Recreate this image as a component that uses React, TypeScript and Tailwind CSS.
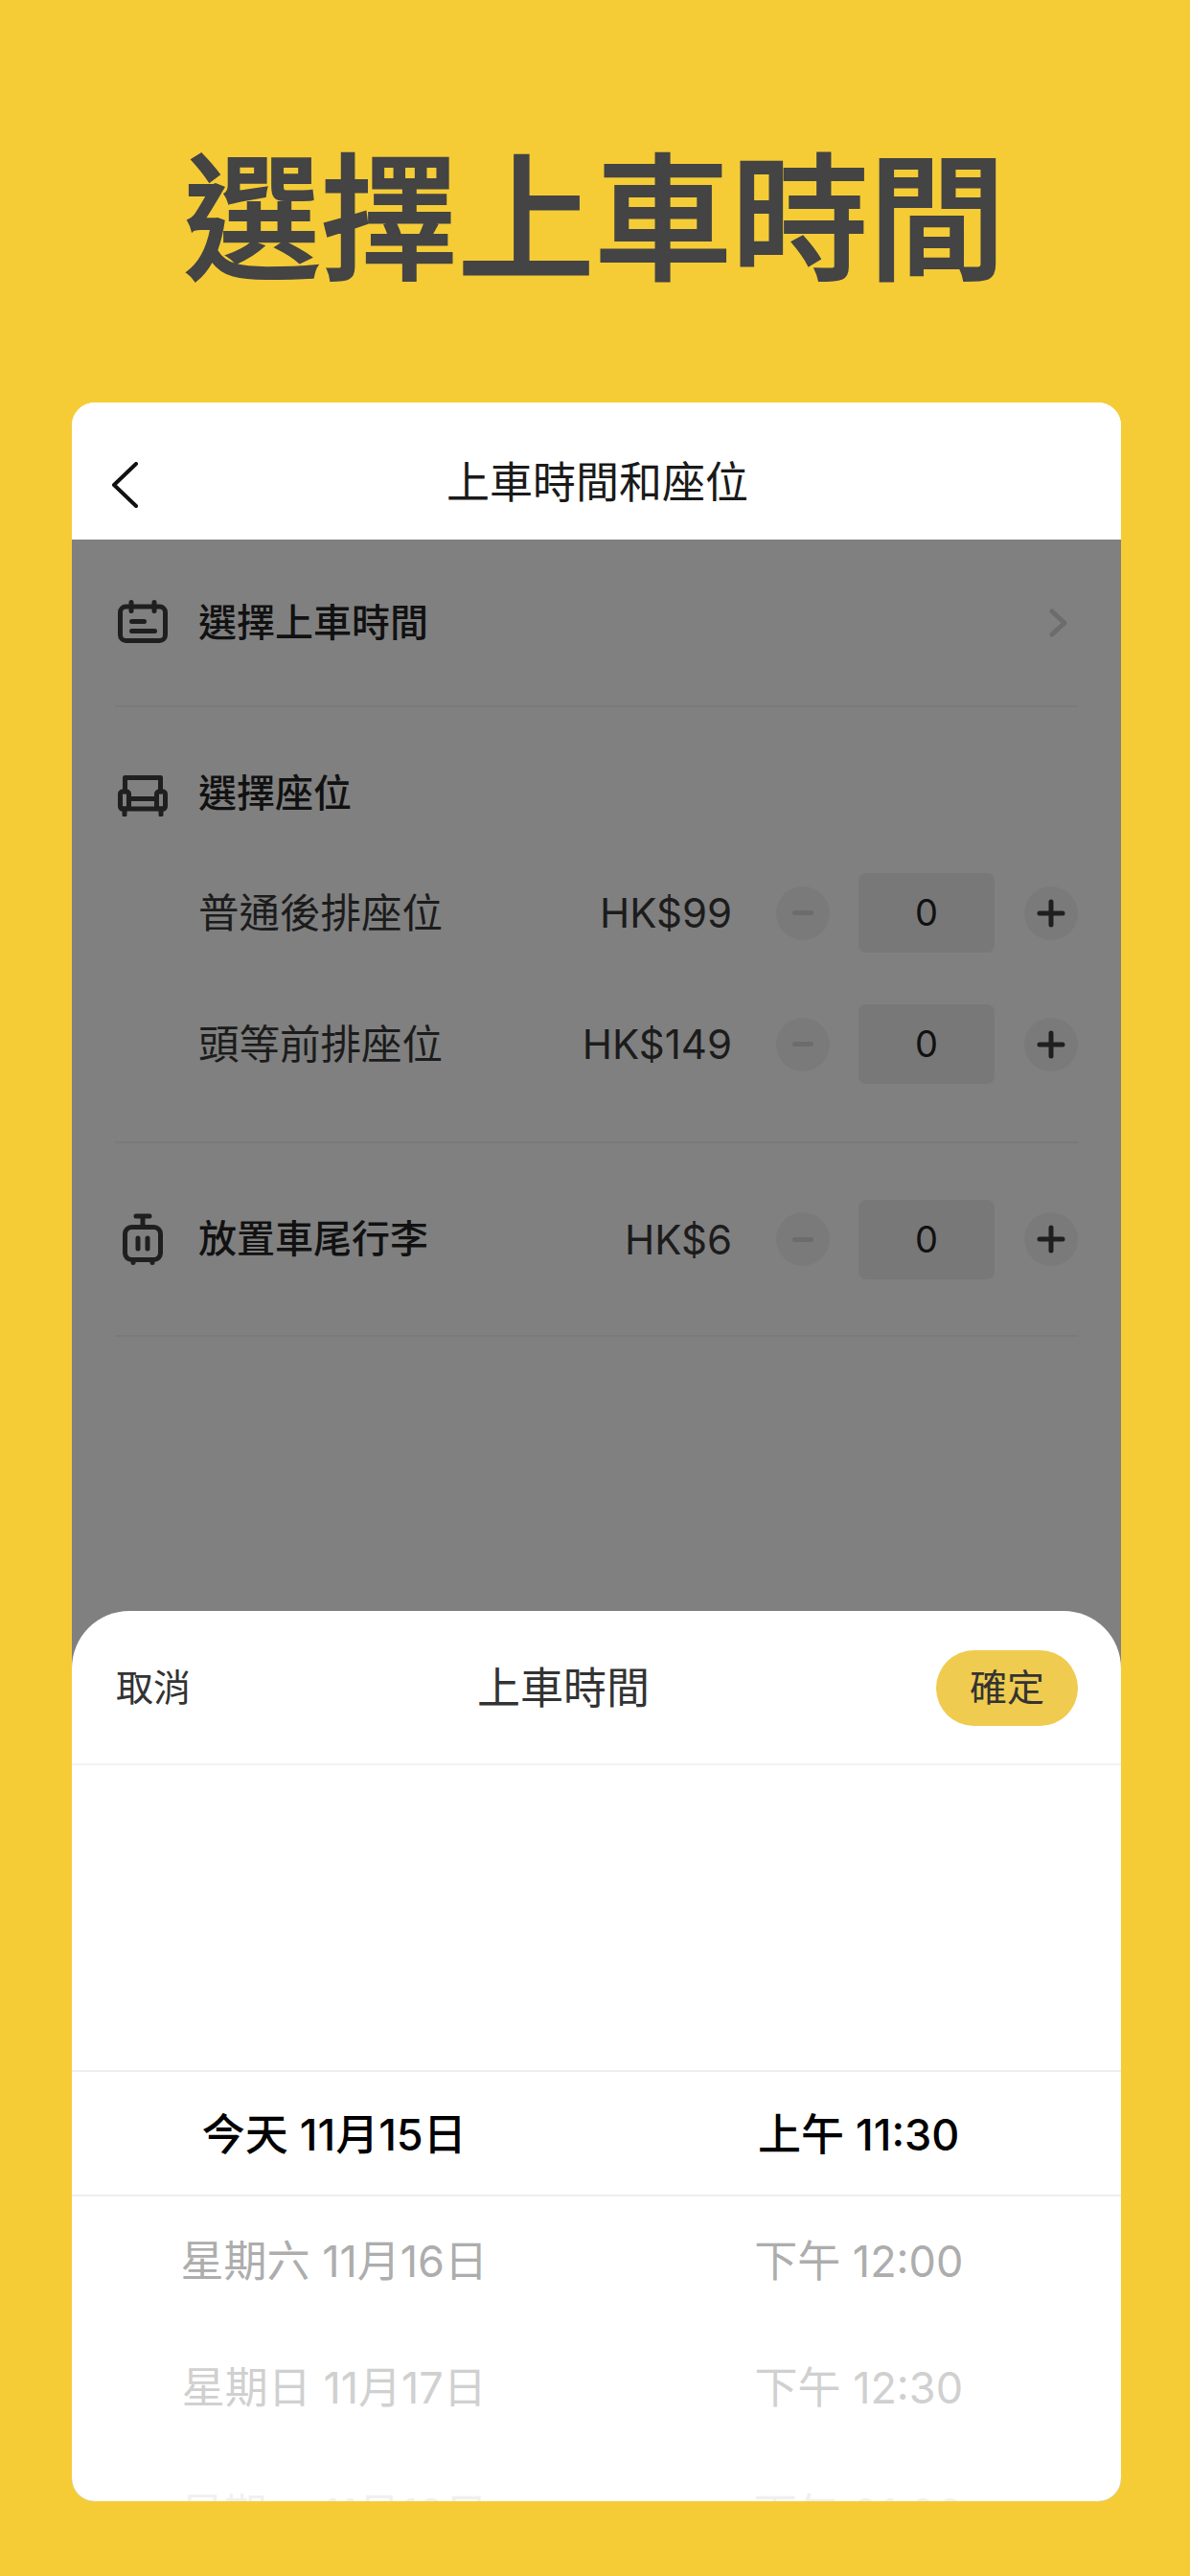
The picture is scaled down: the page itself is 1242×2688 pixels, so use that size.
import React from 'react';

const FONT = 'font-["Inter","Noto_Sans_CJK_TC",sans-serif]';

const CalendarIcon = () => (
  <svg width="52" height="45" viewBox="0 0 52 45" fill="none" stroke="#1f1f1f" strokeWidth="5" strokeLinecap="round" className="ml-[3px] mt-[-3px] shrink-0">
    <rect x="2.5" y="7" width="47" height="35.5" rx="6" />
    <path d="M14 2.5v9M38 2.5v9M14.5 22.5h13M14.5 32.5h24" />
  </svg>
);

const SofaIcon = () => (
  <svg width="52" height="43" viewBox="0 0 52 43" fill="none" stroke="#1f1f1f" strokeWidth="5" strokeLinecap="round" strokeLinejoin="round" className="ml-[3px] mt-[4px] shrink-0">
    <path d="M7.5 17V2.5h37V17" />
    <rect x="2.5" y="17" width="9" height="18" rx="2.5" />
    <rect x="40.5" y="17" width="9" height="18" rx="2.5" />
    <path d="M11.5 24.5h29M4 35h44M7 36v5M45 36v5" />
  </svg>
);

const LuggageIcon = () => (
  <svg width="42" height="54" viewBox="0 0 42 54" fill="none" stroke="#1f1f1f" strokeWidth="5" strokeLinecap="round" className="shrink-0">
    <rect x="2.5" y="14.5" width="37" height="34" rx="7" />
    <path d="M14 3h14M21 3v11M16 26v11M26 26v11M11 49v2.5M31 49v2.5" />
  </svg>
);

const Stepper = () => (
  <div className="flex items-center">
    <div className="flex h-[56px] w-[56px] items-center justify-center rounded-full bg-[#7a7a7a]">
      <div className="h-[5px] w-[22px] rounded-full bg-[#6c6c6c]" />
    </div>
    <div className="ml-[30px] flex h-[83px] w-[142px] items-center justify-center rounded-[8px] bg-[#787878] text-[38px] text-[#111]">0</div>
    <div className="ml-[31px] flex h-[56px] w-[56px] items-center justify-center rounded-full bg-[#7a7a7a]">
      <svg width="30" height="30" viewBox="0 0 30 30" stroke="#1f1f1f" strokeWidth="5" strokeLinecap="round">
        <path d="M3 15h24M15 3v24" />
      </svg>
    </div>
  </div>
);

const SeatRow = ({ label, price, className }: { label: string; price: string; className?: string }) => (
  <div className={`flex h-[83px] items-center ${className ?? ''}`}>
    <span className="ml-[87px] text-[42.5px] text-[#1c1c1c]">{label}</span>
    <span className="ml-auto mr-[46px] text-[42px] text-[#1c1c1c]">{price}</span>
    <Stepper />
  </div>
);

const pickerRows = [
  { date: '今天 11月15日', time: '上午 11:30', color: 'text-black font-medium', border: 'border-y-2 border-[#eeeeee]' },
  { date: '星期六 11月16日', time: '下午 12:00', color: 'text-[#adadad]', border: '' },
  { date: '星期日 11月17日', time: '下午 12:30', color: 'text-[#d0d0d0]', border: '' },
  { date: '星期一 11月18日', time: '下午 01:00', color: 'text-[#f0f0f0]', border: '' },
];

export default function App() {
  return (
    <div className={`flex h-[2688px] w-[1242px] flex-col overflow-hidden bg-[#f5cc36] pb-[78px] pl-[75px] pr-[72px] ${FONT}`}>
      <h1 className="flex h-[420px] shrink-0 items-center justify-center pr-[4px] pt-[36px] text-[143px] font-medium leading-none text-[#444444] [-webkit-text-stroke:2px_#444444]">
        選擇上車時間
      </h1>

      <div className="flex min-h-0 flex-1 flex-col overflow-hidden rounded-[24px] bg-white">
        <div className="relative flex h-[143px] shrink-0 items-center justify-center bg-white pl-[2px] pt-[24px] text-[45px] text-[#1a1a1a]">
          <svg width="30" height="48" viewBox="0 0 30 48" fill="none" stroke="#111" strokeWidth="4" strokeLinecap="round" strokeLinejoin="round" className="absolute left-[41px] top-[62px]">
            <path d="M26 2 3 24l23 22" />
          </svg>
          上車時間和座位
        </div>

        <div className="flex min-h-0 flex-1 flex-col bg-[#808080]">
          <div className="mx-[45px] flex flex-col">
            <div className="flex h-[175px] items-center border-b-2 border-[#7a7a7a]">
              <CalendarIcon />
              <span className="ml-[32px] text-[40px] font-medium text-[#111]">選擇上車時間</span>
              <svg width="20" height="30" viewBox="0 0 20 30" fill="none" stroke="#6c6c6c" strokeWidth="5" strokeLinecap="round" strokeLinejoin="round" className="ml-auto mr-[10px]">
                <path d="M3 3l13 12L3 27" />
              </svg>
            </div>

            <div className="flex flex-col border-b-2 border-[#7a7a7a] pb-[60px] pt-[67px]">
              <div className="flex h-[46px] items-center">
                <SofaIcon />
                <span className="ml-[32px] text-[40px] font-medium text-[#111]">選擇座位</span>
              </div>
              <SeatRow label="普通後排座位" price="HK$99" className="mt-[60px]" />
              <SeatRow label="頭等前排座位" price="HK$149" className="mt-[54px]" />
            </div>

            <div className="flex h-[202px] items-center border-b-2 border-[#7a7a7a]">
              <div className="flex w-[87px] shrink-0 pl-[8px]">
                <LuggageIcon />
              </div>
              <span className="text-[40px] font-medium text-[#111]">放置車尾行李</span>
              <span className="ml-auto mr-[46px] text-[42px] text-[#1c1c1c]">HK$6</span>
              <Stepper />
            </div>
          </div>

          <div className="mt-auto flex h-[929px] shrink-0 flex-col overflow-hidden rounded-t-[60px] bg-white">
            <div className="flex h-[161px] shrink-0 items-center justify-between border-b-2 border-[#f2f2f2] pl-[46px] pr-[45px] pt-[2px]">
              <span className="text-[39px] text-[#333333]">取消</span>
              <span className="text-[45px] text-[#333333]">上車時間</span>
              <div className="flex h-[79px] w-[148px] items-center justify-center rounded-full bg-[#efcb50] text-[39px] text-[#333333]">確定</div>
            </div>
            <div className="flex flex-col pt-[318px]">
              {pickerRows.map((row) => (
                <div key={row.date} className={`grid h-[132px] shrink-0 grid-cols-2 items-center pt-[3px] text-center text-[45px] ${row.color} ${row.border}`}>
                  <span>{row.date}</span>
                  <span>{row.time}</span>
                </div>
              ))}
            </div>
          </div>
        </div>
      </div>
    </div>
  );
}
